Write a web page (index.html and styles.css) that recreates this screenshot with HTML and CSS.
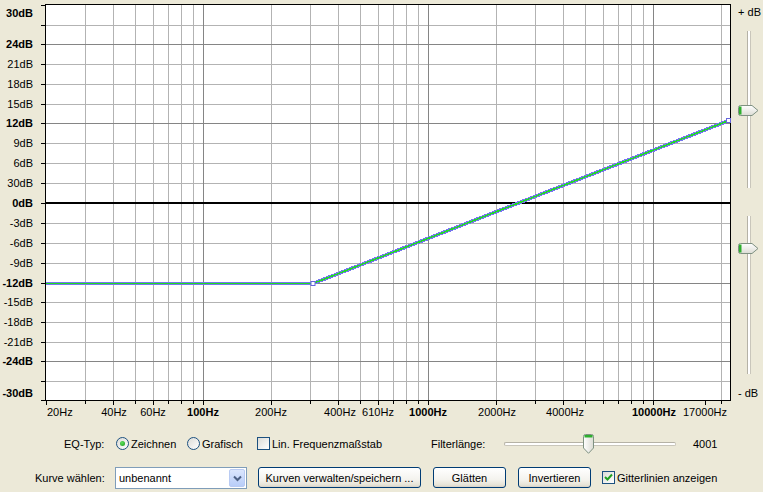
FILE: index.html
```html
<!DOCTYPE html>
<html>
<head>
<meta charset="utf-8">
<title>Equalizer</title>
<link rel="stylesheet" href="styles.css">
</head>
<body>
<div class="app">
  <div class="top">
    <svg class="plot" width="733" height="425" viewBox="0 0 733 425">
      <rect x="45.5" y="4.5" width="685" height="396" fill="#ffffff"/>
      <path class="grid-light" d="M85.5 5V400M113.5 5V400M135.5 5V400M153.5 5V400M168.5 5V400M181.5 5V400M193.5 5V400M271.5 5V400M310.5 5V400M338.5 5V400M360.5 5V400M378.5 5V400M393.5 5V400M406.5 5V400M418.5 5V400M496.5 5V400M535.5 5V400M563.5 5V400M585.5 5V400M603.5 5V400M618.5 5V400M631.5 5V400M643.5 5V400M721.5 5V400M46 25.5H730M46 64.5H730M46 84.5H730M46 104.5H730M46 143.5H730M46 163.5H730M46 183.5H730M46 223.5H730M46 243.5H730M46 263.5H730M46 302.5H730M46 322.5H730M46 342.5H730M46 381.5H730"/>
      <path class="grid-dark" d="M203.5 5V400M428.5 5V400M653.5 5V400M46 44.5H730M46 123.5H730M46 283.5H730M46 361.5H730"/>
      <rect x="46" y="202" width="685" height="2" fill="#000000"/>
      <rect x="45.5" y="4.5" width="685" height="396" fill="none" stroke="#000000"/>
      <path class="ticks" d="M41 5.5H45M41 25.5H45M41 44.5H45M41 64.5H45M41 84.5H45M41 104.5H45M41 123.5H45M41 143.5H45M41 163.5H45M41 183.5H45M41 203.5H45M41 223.5H45M41 243.5H45M41 263.5H45M41 283.5H45M41 302.5H45M41 322.5H45M41 342.5H45M41 361.5H45M41 381.5H45M41 400.5H45M46.5 401V405M85.5 401V404M113.5 401V405M135.5 401V404M153.5 401V405M168.5 401V404M181.5 401V404M193.5 401V404M203.5 401V405M271.5 401V405M310.5 401V404M338.5 401V405M360.5 401V404M378.5 401V405M393.5 401V404M406.5 401V404M418.5 401V404M428.5 401V405M496.5 401V405M535.5 401V404M563.5 401V405M585.5 401V404M603.5 401V404M618.5 401V404M631.5 401V404M643.5 401V404M653.5 401V405M705.5 401V405M721.5 401V404"/>
      <polyline class="curve-blue" points="46,283.5 313,283.5 729,120.5"/>
      <polyline class="curve-green" points="46,283.5 313,283.5 729,120.5"/>
      <rect class="node" x="311" y="281.5" width="4" height="4"/>
      <rect class="node" x="726.5" y="118.5" width="4" height="4"/>
      <g class="ylabels">
        <text x="33" y="17" class="b">30dB</text>
        <text x="33" y="48" class="b">24dB</text>
        <text x="33" y="68">21dB</text>
        <text x="33" y="88">18dB</text>
        <text x="33" y="108">15dB</text>
        <text x="33" y="127" class="b">12dB</text>
        <text x="33" y="147">9dB</text>
        <text x="33" y="167">6dB</text>
        <text x="33" y="187">30dB</text>
        <text x="33" y="207" class="b">0dB</text>
        <text x="33" y="227">-3dB</text>
        <text x="33" y="247">-6dB</text>
        <text x="33" y="267">-9dB</text>
        <text x="33" y="287" class="b">-12dB</text>
        <text x="33" y="306">-15dB</text>
        <text x="33" y="326">-18dB</text>
        <text x="33" y="346">-21dB</text>
        <text x="33" y="365" class="b">-24dB</text>
        <text x="33" y="397" class="b">-30dB</text>
      </g>
      <g class="xlabels">
        <text x="47" y="416" class="start">20Hz</text>
        <text x="114" y="416">40Hz</text>
        <text x="153" y="416">60Hz</text>
        <text x="203" y="416" class="b">100Hz</text>
        <text x="271" y="416">200Hz</text>
        <text x="340" y="416">400Hz</text>
        <text x="378" y="416">610Hz</text>
        <text x="428" y="416" class="b">1000Hz</text>
        <text x="497" y="416">2000Hz</text>
        <text x="565" y="416">4000Hz</text>
        <text x="654" y="416" class="b">10000Hz</text>
        <text x="705" y="416">17000Hz</text>
      </g>
    </svg>
    <div class="gain">
      <div class="gain-lbl">+ dB</div>
      <div class="vtrack t1">
        <svg class="vthumb v1" width="21" height="11" viewBox="0 0 21 11">
          <defs>
            <linearGradient id="tg" x1="0" y1="0" x2="0" y2="1">
              <stop offset="0" stop-color="#ffffff"/>
              <stop offset="1" stop-color="#dcdcd4"/>
            </linearGradient>
          </defs>
          <path d="M2.5 0.5H14L20 5.5L14 10.5H2.5Q0.5 10.5 0.5 8.5V2.5Q0.5 0.5 2.5 0.5Z" fill="url(#tg)" stroke="#7f9182"/>
          <rect x="1" y="1.5" width="2.5" height="8" fill="#2eae2e"/>
        </svg>
      </div>
      <div class="vtrack t2">
        <svg class="vthumb v2" width="21" height="11" viewBox="0 0 21 11">
          <path d="M2.5 0.5H14L20 5.5L14 10.5H2.5Q0.5 10.5 0.5 8.5V2.5Q0.5 0.5 2.5 0.5Z" fill="url(#tg)" stroke="#7f9182"/>
          <rect x="1" y="1.5" width="2.5" height="8" fill="#2eae2e"/>
        </svg>
      </div>
      <div class="gain-lbl minus">- dB</div>
    </div>
  </div>

  <div class="row row1">
    <span class="eq-lbl">EQ-Typ:</span>
    <label class="opt opt-z"><span class="radio checked"></span><span>Zeichnen</span></label>
    <label class="opt opt-g"><span class="radio"></span><span>Grafisch</span></label>
    <label class="opt opt-lin"><span class="check"></span><span>Lin. Frequenzmaßstab</span></label>
    <span class="filt-lbl">Filterlänge:</span>
    <div class="hslider">
      <div class="htrack"></div>
      <svg class="hthumb" width="11" height="20" viewBox="0 0 11 20">
        <defs>
          <linearGradient id="hg" x1="0" y1="0" x2="1" y2="0">
            <stop offset="0" stop-color="#ffffff"/>
            <stop offset="1" stop-color="#dcdcd4"/>
          </linearGradient>
        </defs>
        <path d="M0.5 2.5Q0.5 0.5 2.5 0.5H8.5Q10.5 0.5 10.5 2.5V14L5.5 19.3L0.5 14Z" fill="url(#hg)" stroke="#7f9182"/>
        <rect x="1.5" y="1" width="8" height="2.5" fill="#2eae2e"/>
      </svg>
    </div>
    <span class="fval">4001</span>
  </div>

  <div class="row row2">
    <span class="kurve-lbl">Kurve wählen:</span>
    <div class="combo">
      <span class="combo-text">unbenannt</span>
      <span class="combo-btn">
        <svg width="9" height="7" viewBox="0 0 9 7"><path d="M1 1.5L4.5 5L8 1.5" fill="none" stroke="#4d6185" stroke-width="2"/></svg>
      </span>
    </div>
    <button class="btn btn-manage">Kurven verwalten/speichern ...</button>
    <button class="btn btn-smooth">Glätten</button>
    <button class="btn btn-inv">Invertieren</button>
    <label class="opt"><span class="check checked"><svg width="11" height="11" viewBox="0 0 11 11"><path d="M2 5L4.5 7.5L9 2.5" fill="none" stroke="#21a121" stroke-width="2"/></svg></span><span>Gitterlinien anzeigen</span></label>
  </div>
</div>
</body>
</html>
```
FILE: styles.css
```css
html, body {
  margin: 0;
  padding: 0;
}
body {
  background: #ece9d8;
  font-family: "Liberation Sans", Arial, sans-serif;
  font-size: 11px;
  color: #000;
  width: 763px;
  height: 492px;
  overflow: hidden;
}
.app {
  display: flex;
  flex-direction: column;
  width: 763px;
  height: 492px;
}
.top {
  display: flex;
  height: 425px;
}
.plot {
  display: block;
  flex: none;
}
.grid-light {
  stroke: #b3b3b3;
  stroke-width: 1;
  fill: none;
}
.grid-dark {
  stroke: #858585;
  stroke-width: 1;
  fill: none;
}
.ticks {
  stroke: #000;
  stroke-width: 1;
  fill: none;
}
.curve-blue {
  fill: none;
  stroke: #7676ee;
  stroke-width: 3.6;
  stroke-linejoin: round;
  shape-rendering: crispEdges;
}
.curve-green {
  fill: none;
  stroke: #1ee01e;
  stroke-width: 1.4;
  stroke-linejoin: round;
  shape-rendering: crispEdges;
}
.node {
  fill: #ffffff;
  stroke: #6666dd;
  stroke-width: 1;
}
.ylabels text {
  font-family: "Liberation Sans", Arial, sans-serif;
  font-size: 11px;
  text-anchor: end;
  fill: #000;
}
.xlabels text {
  font-family: "Liberation Sans", Arial, sans-serif;
  font-size: 11px;
  text-anchor: middle;
  fill: #000;
}
.xlabels text.start {
  text-anchor: start;
}
text.b {
  font-weight: bold;
}

.gain {
  width: 30px;
  display: flex;
  flex-direction: column;
  align-items: center;
}
.gain-lbl {
  margin-top: 5px;
  height: 14px;
  line-height: 14px;
  padding-left: 3px;
  white-space: nowrap;
}
.gain-lbl.minus {
  margin-top: 12px;
  padding-left: 0;
}
.vtrack {
  position: relative;
  width: 2px;
  background: #ffffff;
  border-left: 1px solid #b5b2a6;
  border-right: 1px solid #c9c6bb;
  margin-left: 1px;
}
.vtrack.t1 {
  margin-top: 12px;
  height: 157px;
}
.vtrack.t2 {
  margin-top: 28px;
  height: 158px;
}
.vthumb {
  position: absolute;
  left: -10px;
  display: block;
}
.vthumb.v1 {
  top: 74px;
}
.vthumb.v2 {
  top: 27px;
}

.row {
  display: flex;
  white-space: nowrap;
}
.row1 {
  height: 37px;
  align-items: center;
  padding-left: 64px;
}
.row2 {
  height: 30px;
  align-items: flex-start;
  padding-top: 5px;
  padding-left: 35px;
  box-sizing: border-box;
}
.eq-lbl {
  width: 52px;
}
.opt {
  display: flex;
  align-items: center;
  gap: 2px;
}
.opt-z { width: 71px; }
.opt-g { width: 70px; }
.opt-lin { width: 174px; }
.filt-lbl { width: 73px; }
.radio {
  width: 13px;
  height: 13px;
  box-sizing: border-box;
  border: 1px solid #1c5180;
  border-radius: 50%;
  background: linear-gradient(135deg, #dcdcd7, #ffffff);
  position: relative;
  flex: none;
}
.radio.checked::after {
  content: "";
  position: absolute;
  left: 3px;
  top: 3px;
  width: 5px;
  height: 5px;
  border-radius: 50%;
  background: radial-gradient(circle at 40% 35%, #5ee05e, #1c9a1c);
}
.check {
  width: 13px;
  height: 13px;
  box-sizing: border-box;
  border: 1px solid #1c5180;
  background: linear-gradient(135deg, #dcdcd7, #ffffff);
  flex: none;
  display: flex;
  align-items: center;
  justify-content: center;
}
.check svg {
  display: block;
}
.hslider {
  width: 172px;
  height: 20px;
  position: relative;
}
.htrack {
  position: absolute;
  left: 0;
  right: 0;
  top: 8px;
  height: 2px;
  background: #ffffff;
  border-top: 1px solid #b5b2a6;
  border-bottom: 1px solid #c9c6bb;
  border-left: 1px solid #b5b2a6;
  border-right: 1px solid #c9c6bb;
  border-radius: 2px;
}
.hthumb {
  position: absolute;
  left: 79px;
  top: 0;
  display: block;
}
.fval {
  margin-left: 17px;
}
.kurve-lbl {
  width: 80px;
  line-height: 22px;
}
.combo {
  width: 132px;
  height: 22px;
  box-sizing: border-box;
  border: 1px solid #7f9db9;
  background: #ffffff;
  display: flex;
  align-items: center;
  justify-content: space-between;
  margin-right: 11px;
}
.combo-text {
  padding-left: 3px;
}
.combo-btn {
  width: 16px;
  height: 18px;
  margin-right: 1px;
  box-sizing: border-box;
  border: 1px solid #b9cbf3;
  border-radius: 2px;
  background: linear-gradient(#dbe6fd, #b8cdf8);
  display: flex;
  align-items: center;
  justify-content: center;
}
.combo-btn svg {
  display: block;
}
.btn {
  height: 21px;
  box-sizing: border-box;
  border: 1px solid #003c74;
  border-radius: 3px;
  background: linear-gradient(#ffffff 0%, #f4f3ee 60%, #e6e3d6 90%, #d6d0c5 100%);
  font-family: "Liberation Sans", Arial, sans-serif;
  font-size: 11px;
  color: #000;
  padding: 0;
  margin: 0;
}
.btn-manage {
  width: 163px;
  margin-right: 12px;
}
.btn-smooth {
  width: 73px;
  margin-right: 12px;
}
.btn-inv {
  width: 73px;
  margin-right: 11px;
}
.row2 .opt {
  height: 21px;
}
```
